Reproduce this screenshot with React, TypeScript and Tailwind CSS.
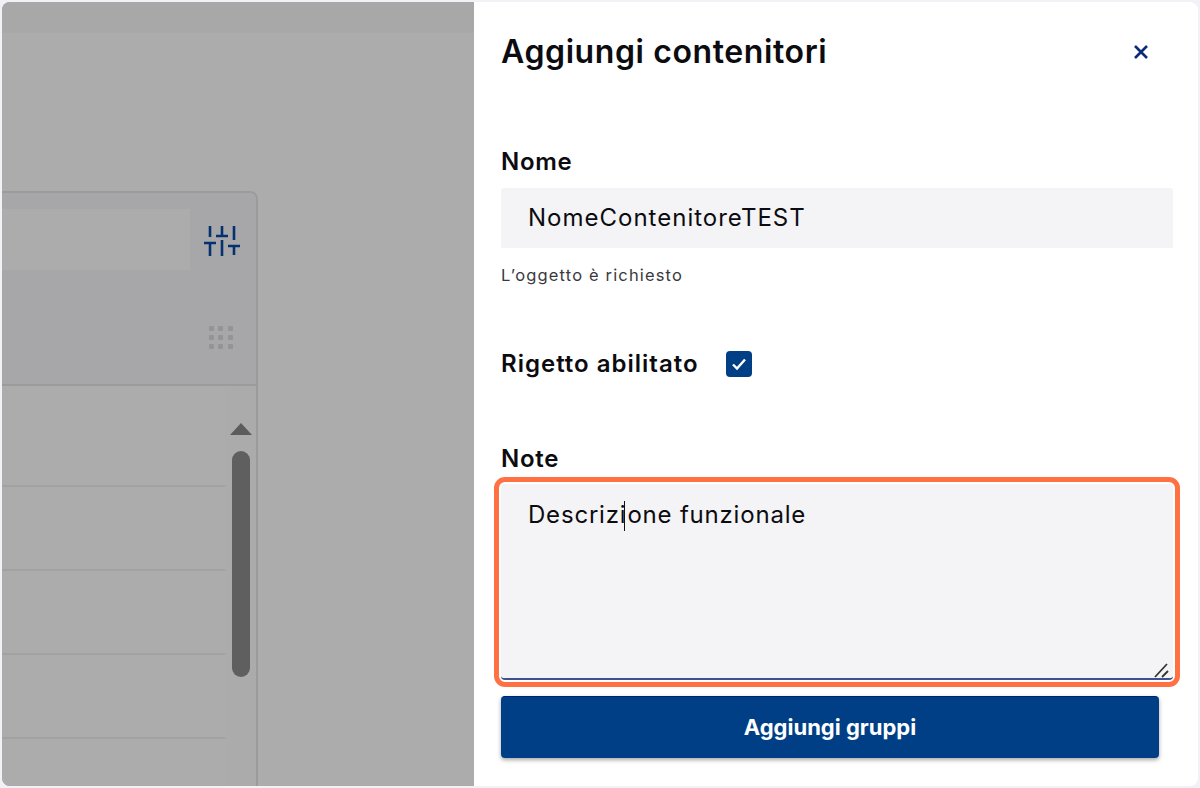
const font = "[font-family:'Inter','Liberation_Sans',sans-serif]"

const FilterIcon = () => (
  <svg width="38" height="32" viewBox="0 0 38 32" fill="none" stroke="#04316f" strokeWidth="2.6">
    <path d="M7 1v11M1 18h12M7 18v13M19 1v10M13 11h12M19 15v16M31 1v14M25 21h12M31 21v9" />
  </svg>
)

const GridIcon = () => (
  <div className="grid grid-cols-3 gap-[4px] w-[24px]">
    {[0, 1, 2, 3, 4, 5, 6, 7, 8].map((i) => (
      <div key={i} className="w-[5px] h-[5px] bg-[#949495] rounded-[1px]" />
    ))}
  </div>
)

const ListPanel = () => (
  <div className="w-[256px] flex-1 flex flex-col min-h-0 bg-[#acacac] border-t-[2px] border-r-[2px] border-[#9b9b9c] rounded-tr-[8px] overflow-hidden">
    <div className="h-[193px] bg-[#a7a7a9] border-b-[2px] border-[#9b9b9c] flex flex-col shrink-0">
      <div className="flex items-start pt-[16px]">
        <div className="w-[188px] h-[61px] bg-[#acacac]" />
        <div className="ml-[13px] mt-[16px]">
          <FilterIcon />
        </div>
      </div>
      <div className="flex justify-end pr-[23px] mt-[56px]">
        <GridIcon />
      </div>
    </div>
    <div className="flex flex-1 min-h-0">
      <div className="w-[223px] flex flex-col pt-[17px]">
        {[0, 1, 2, 3, 4].map((i) => (
          <div key={i} className="h-[84px] shrink-0 border-b-[2px] border-[#a2a2a2]" />
        ))}
      </div>
      <div className="flex-1 flex flex-col items-center bg-[#ababab] pt-[37px]">
        <div className="w-0 h-0 border-x-[11px] border-x-transparent border-b-[12px] border-b-[#5c5c5c]" />
        <div className="w-[18px] h-[226px] mt-[16px] bg-[#5f5f5f] rounded-[9px]" />
      </div>
    </div>
  </div>
)

const App = () => {
  return (
    <div className={`${font} w-[1200px] h-[788px] overflow-hidden bg-[#f1f1f6] pt-[2px] pl-[2px] pr-[2px] pb-[2px]`}>
      <div className="flex h-full rounded-[8px] overflow-hidden">
        <div className="w-[472px] shrink-0 flex flex-col bg-[#acacac]">
          <div className="h-[31px] bg-[#a8a8a9] shrink-0" />
          <div className="h-[158px] shrink-0" />
          <ListPanel />
        </div>

        <div className="flex-1 bg-white pl-[27px] pr-[25px] flex flex-col text-[#0c0c10]">
          <div className="flex items-center justify-between pt-[28px] pr-[7px]">
            <h1 className="text-[32px] leading-[44px] font-semibold tracking-[0.6px]">Aggiungi contenitori</h1>
            <svg width="18" height="18" viewBox="0 0 18 18" fill="none" stroke="#0b2a7a" strokeWidth="2.6" className="mr-[16px]">
              <path d="M3 3l12 12M15 3L3 15" />
            </svg>
          </div>

          <label className="mt-[72px] text-[24px] leading-[32px] font-semibold tracking-[0.7px]">Nome</label>
          <div className="mt-[10px] h-[60px] bg-[#f4f4f6] rounded-t-[3px] pl-[27px] flex items-center text-[24px] tracking-[1px]">
            NomeContenitoreTEST
          </div>
          <p className="mt-[16px] text-[16.5px] leading-[22px] text-[#3a3a3e] tracking-[1.15px]">L’oggetto è richiesto</p>

          <div className="mt-[62px] flex items-center gap-[27px]">
            <span className="text-[24px] leading-[32px] font-semibold tracking-[1px]">Rigetto abilitato</span>
            <div className="w-[26px] h-[26px] rounded-[4px] bg-[#003f86] flex items-center justify-center">
              <svg width="16" height="14" viewBox="0 0 16 14" fill="none" stroke="white" strokeWidth="2.4">
                <path d="M2 7.5l4 4 8-9" />
              </svg>
            </div>
          </div>

          <label className="mt-[63px] text-[24px] leading-[32px] font-semibold tracking-[0.7px]">Note</label>
          <div className="relative mt-[9px] h-[196px] bg-[#f4f4f6] border-b-[2px] border-[#3f4f90] pl-[27px] pt-[15px] text-[24px] leading-[32px] tracking-[0.8px] outline-[5px] outline-[#ff7043] outline-offset-[2px] rounded-[4px]">
            Descrizi<span className="inline-block w-0 h-[30px] align-middle border-l border-[#111] -translate-x-[2px]" />one funzionale
            <svg width="16" height="16" viewBox="0 0 16 16" fill="none" stroke="#333" strokeWidth="1.8" className="absolute right-[3px] bottom-[0px]">
              <path d="M1 15L13 2M8 15l6-6" />
            </svg>
          </div>

          <button className="mt-[16px] w-[658px] h-[62px] bg-[#003f86] border-t-[1px] border-[#00207a] rounded-[4px] text-white text-[22px] font-bold shadow-[0_2px_4px_rgba(0,0,0,0.35)]">
            Aggiungi gruppi
          </button>
        </div>
      </div>
    </div>
  )
}

export default App
